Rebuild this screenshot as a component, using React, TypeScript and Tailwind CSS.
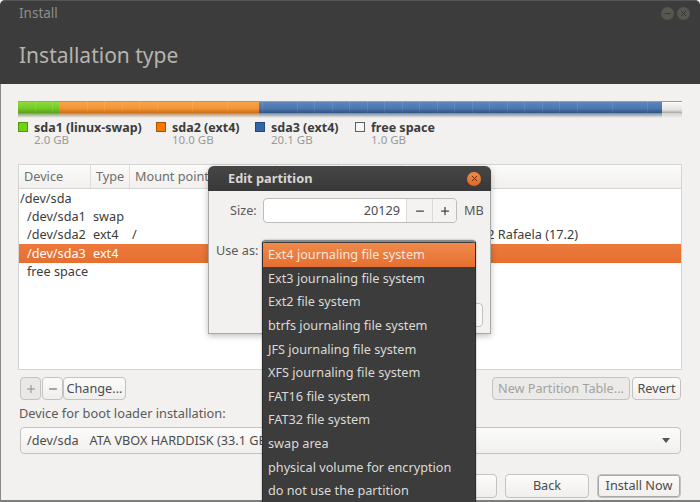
import React from 'react';
import { Minus, Plus, X } from 'lucide-react';

const font = 'font-["Noto_Sans","Open_Sans",sans-serif]';

const segments = [
  { width: 'w-[41px]', bar: 'bg-[linear-gradient(#8fdc3c,#74c826_60%,#5a9e1c)]', glow: 'bg-[linear-gradient(#7c9c5c,#f2f1f0)]' },
  { width: 'w-[200px]', bar: 'bg-[linear-gradient(#f7a648,#f29433_60%,#c96e16)]', glow: 'bg-[linear-gradient(#b08a5e,#f2f1f0)]' },
  { width: 'w-[403px]', bar: 'bg-[linear-gradient(#5f87bd,#4a76ad_60%,#2d5480)]', glow: 'bg-[linear-gradient(#77879b,#f2f1f0)]' },
  { width: 'w-[20px]', bar: 'bg-[linear-gradient(#fafafa,#e4e3e2_70%,#aaa9a7)]', glow: 'bg-[linear-gradient(#d0cfce,#f2f1f0)]' },
];

const legend = [
  { name: 'sda1 (linux-swap)', size: '2.0 GB', swatch: 'bg-[#73d216] border-[#4e9a06]', width: 'w-[138px]' },
  { name: 'sda2 (ext4)', size: '10.0 GB', swatch: 'bg-[#f57900] border-[#a85400]', width: 'w-[99px]' },
  { name: 'sda3 (ext4)', size: '20.1 GB', swatch: 'bg-[#3465a4] border-[#234a7c]', width: 'w-[100px]' },
  { name: 'free space', size: '1.0 GB', swatch: 'bg-[#f6f6f6] border-[#5e5e5e]', width: 'w-[100px]' },
];

const columns = [
  { label: 'Device', width: 'w-[72px]' },
  { label: 'Type', width: 'w-[39px]' },
  { label: 'Mount point', width: 'w-[147px]' },
  { label: '', width: 'w-[62px]' },
  { label: '', width: 'w-[63px]' },
];

const rows = [
  { device: '/dev/sda', indent: 'pl-[1px]' },
  { device: '/dev/sda1', type: 'swap' },
  { device: '/dev/sda2', type: 'ext4', mount: '/', system: 'Linux Mint 18.2 Rafaela (17.2)' },
  { device: '/dev/sda3', type: 'ext4', selected: true },
  { device: 'free space' },
];

const menu = [
  'Ext4 journaling file system',
  'Ext3 journaling file system',
  'Ext2 file system',
  'btrfs journaling file system',
  'JFS journaling file system',
  'XFS journaling file system',
  'FAT16 file system',
  'FAT32 file system',
  'swap area',
  'physical volume for encryption',
  'do not use the partition',
];

const Btn = ({ children, className = '' }: { children: React.ReactNode; className?: string }) => (
  <button className={`flex items-center justify-center rounded-[4px] border border-[#c4c3c1] bg-[linear-gradient(#fbfbfa,#f0efee)] text-[12.7px] text-[#4c4c4c] ${className}`}>
    {children}
  </button>
);

const App = () => {
  return (
    <div className={`relative flex h-[502px] w-[700px] flex-col overflow-hidden bg-[#f2f1f0] text-[12.7px] text-[#3c3c3c] ${font}`}>
      <header className="flex h-[84px] shrink-0 flex-col rounded-t-[5px] border-t border-[#555] bg-[#3c3c3c] pl-[19px]">
        <div className="flex h-[24px] items-center justify-between pr-[10px]">
          <span className="text-[13.5px] text-[#8f8e8a]">Install</span>
          <div className="flex gap-[3px]">
            <span className="flex h-[13px] w-[13px] items-center justify-center rounded-full bg-[#57564f] text-[#2e2d2a]"><Minus size={9} strokeWidth={2} /></span>
            <span className="flex h-[13px] w-[13px] items-center justify-center rounded-full bg-[#57564f] text-[#2e2d2a]"><X size={9} strokeWidth={2} /></span>
          </div>
        </div>
        <h1 className="mt-[15px] text-[21px] leading-[30px] text-[#b5b4af]">Installation type</h1>
      </header>

      <main className="flex min-h-0 flex-1 flex-col border-l border-[#8a8a88] pl-[17px] pr-[18px] pt-[17px]">
        <div className="relative flex h-[17px] shrink-0">
          {segments.map((s) => (
            <div key={s.width} className={`flex flex-col ${s.width}`}>
              <div className={`h-[12px] border-t border-[#9a9a98] ${s.bar}`} />
              <div className={`h-[5px] ${s.glow}`} />
            </div>
          ))}
          <div className="absolute left-0 right-[20px] top-0 h-[12px] bg-[repeating-linear-gradient(90deg,transparent_0_16.5px,rgba(255,255,255,0.08)_16.5px_17.5px)]" />
        </div>

        <div className="mt-[3px] flex h-[43px] shrink-0">
          {legend.map((l) => (
            <div key={l.name} className={`flex gap-[6px] ${l.width}`}>
              <span className={`mt-[1px] h-[10px] w-[10px] shrink-0 border ${l.swatch}`} />
              <div className="flex flex-col">
                <span className="whitespace-nowrap text-[12.5px] font-bold leading-[13px] text-[#3c3c3c]">{l.name}</span>
                <span className="text-[11.5px] leading-[12px] text-[#9a9a98]">{l.size}</span>
              </div>
            </div>
          ))}
        </div>

        <section className="flex h-[206px] shrink-0 flex-col border border-[#d5d4d2] bg-white">
          <div className="flex h-[24px] shrink-0 border-b border-[#d5d4d2] bg-[linear-gradient(#fbfbfa,#f1f0ef)]">
            {columns.map((c, i) => (
              <div key={i} className={`flex items-center border-r border-[#dfdedc] pl-[5px] text-[12.7px] text-[#6e6e6c] ${c.width}`}>{c.label}</div>
            ))}
          </div>
          {rows.map((r) => (
            <div key={r.device} className={`flex h-[18.4px] items-center whitespace-nowrap text-[12.7px] ${r.selected ? 'bg-[linear-gradient(#ec7a3c,#e56f30)] text-white' : 'text-[#3c3c3c]'}`}>
              <span className={`w-[73px] ${r.indent ?? 'pl-[8px]'}`}>{r.device}</span>
              <span className="w-[39px] pl-[1px]">{r.type}</span>
              <span className="w-[100px] pl-[1px]">{r.mount}</span>
              {r.system && <span className="ml-auto pr-[103px] text-[#3c3c3c]">{r.system}</span>}
            </div>
          ))}
        </section>

        <div className="mt-[7px] flex h-[23px] shrink-0 items-stretch pl-[2px] pr-[1px]">
          <Btn className="w-[21px] bg-none! bg-[#e9e8e7]! text-[#8a8a88]"><Plus size={12} /></Btn>
          <Btn className="ml-[1px] w-[21px] text-[#555]"><Minus size={12} /></Btn>
          <Btn className="w-[63px]">Change...</Btn>
          <Btn className="ml-auto w-[138px] bg-none! bg-[#ebeae9]! text-[#a3a2a0]">New Partition Table...</Btn>
          <Btn className="ml-[2px] w-[49px]">Revert</Btn>
        </div>

        <label className="ml-[1px] mt-[6px] h-[20px] shrink-0 text-[12.8px] leading-[15px] text-[#5a5a58]">Device for boot loader installation:</label>
        <div className="ml-[2px] mr-[1px] mt-[1px] flex h-[27px] shrink-0 items-center justify-between rounded-[4px] border border-[#c4c3c1] bg-[linear-gradient(#fbfbfa,#f1f0ef)] pl-[6px] pr-[10px] text-[#4c4c4c]">
          <span className="flex gap-[11px] whitespace-nowrap">
            <span>/dev/sda</span>
            <span>ATA VBOX HARDDISK (33.1 GB)</span>
          </span>
          <span className="h-0 w-0 border-x-[4.5px] border-t-[5px] border-x-transparent border-t-[#555]" />
        </div>

        <div className="mt-[20px] flex h-[24px] shrink-0 justify-end gap-[8px] pr-[1px]">
          <Btn className="w-[84px]">Quit</Btn>
          <Btn className="w-[84px]">Back</Btn>
          <Btn className="w-[84px] border-[#8f8e8c] shadow-[inset_0_0_0_1px_#a9a8a6]">Install Now</Btn>
        </div>
      </main>
      <div className="h-[2px] shrink-0 bg-[#7d7d7b]" />

      {/* dialog over the window */}
      <div className="absolute left-[208px] top-[166px] flex h-[168px] w-[283px] flex-col rounded-t-[6px] border-x border-b border-[#a9a8a6] bg-[#f2f1f0] shadow-[0_2px_6px_rgba(0,0,0,0.25)]">
        <div className="-mx-px flex h-[25px] shrink-0 items-center justify-between rounded-t-[6px] bg-[linear-gradient(#464646,#383838)] pl-[20px] pr-[10px]">
          <span className="text-[12.8px] font-bold text-[#d8d7d3]">Edit partition</span>
          <span className="flex h-[14px] w-[14px] items-center justify-center rounded-full bg-[linear-gradient(#f58b4c,#df6522)] text-[#5a2a10]"><X size={9} strokeWidth={2.5} /></span>
        </div>
        <div className="mt-[7px] flex h-[25px] items-center pl-[21px]">
          <span className="w-[33px] text-[#5a5a58]">Size:</span>
          <div className="flex h-[25px] w-[194px] items-stretch rounded-[4px] border border-[#bdbcba] bg-white">
            <span className="flex flex-1 items-center justify-end pr-[6px] text-[#4c4c4c]">20129</span>
            <span className="flex w-[26px] items-center justify-center border-l border-[#dcdbd9] bg-[#f4f3f2] text-[#444]"><Minus size={12} strokeWidth={2.5} /></span>
            <span className="flex w-[24px] items-center justify-center rounded-r-[4px] border-l border-[#dcdbd9] bg-[#f4f3f2] text-[#444]"><Plus size={12} strokeWidth={2.5} /></span>
          </div>
          <span className="ml-[7px] text-[#5a5a58]">MB</span>
        </div>
        <span className="ml-[7px] mt-[18px] text-[#5a5a58]">Use as:</span>
        <div className="absolute bottom-[6px] right-[7px] h-[24px] w-[80px] rounded-[4px] border border-[#c4c3c1] bg-[#f8f8f7]" />
      </div>

      {/* open combo box list */}
      <div className="absolute left-[262px] top-[240px] h-[264px] w-[214px] rounded-t-[4px] border-x border-t-2 border-x-[#2d2d2d] border-t-[#8a8a88] bg-[#3c3c3c] pt-[1px] shadow-[0_0_2px_rgba(0,0,0,0.4)]">
        {menu.map((m, i) => (
          <div key={m} className={`flex h-[23.6px] items-center whitespace-nowrap pl-[5px] text-[12.7px] ${i === 0 ? 'bg-[linear-gradient(#f08a4a,#e56f30)] text-[#f3e6dc]' : 'text-[#dbdad6]'}`}>{m}</div>
        ))}
      </div>
    </div>
  );
};

export default App;
